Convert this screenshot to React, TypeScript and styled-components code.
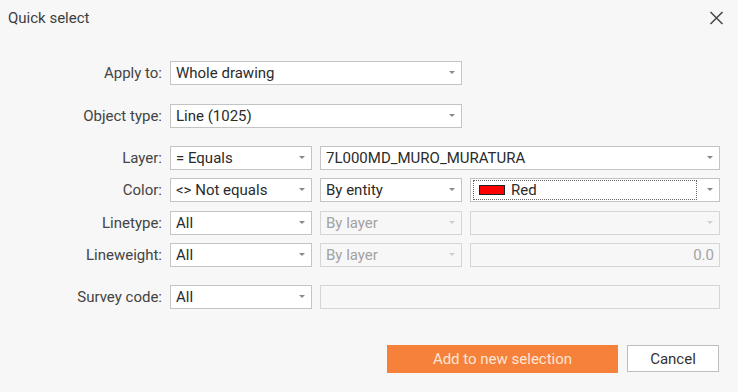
import React from 'react'
import styled, { createGlobalStyle, css } from 'styled-components'

const GlobalStyle = createGlobalStyle`
  html, body {
    margin: 0;
    padding: 0;
    background: #f7f7f7;
  }
  body {
    font-family: Roboto, "Liberation Sans", sans-serif;
    color: #333;
  }
`

const Dialog = styled.div`
  width: 738px;
  height: 392px;
  box-sizing: border-box;
  background: #f7f7f7;
  display: flex;
  flex-direction: column;
`

const Header = styled.div`
  display: flex;
  align-items: center;
  justify-content: space-between;
  height: 36px;
  padding: 0 14px 0 8px;
`

const Title = styled.span`
  font-size: 15px;
  color: #3d3d3d;
`

const CloseButton = styled.button`
  border: 0;
  background: transparent;
  padding: 0;
  width: 16px;
  height: 16px;
  display: flex;
  align-items: center;
  justify-content: center;
  cursor: pointer;
`

const Form = styled.div`
  display: flex;
  flex-direction: column;
  gap: 18.5px;
  margin-top: 25px;
  padding-right: 18px;
`

const Group = styled.div`
  display: grid;
  grid-template-columns: 162px 142px 142px 250px;
  grid-auto-rows: 24px;
  column-gap: 8px;
  row-gap: 8.3px;
`

const Label = styled.label`
  display: flex;
  align-items: center;
  justify-content: flex-end;
  font-size: 15px;
  color: #444;
  white-space: nowrap;
`

const Field = styled.div<{ $span?: number; $disabled?: boolean; $right?: boolean }>`
  position: relative;
  grid-column: span ${(p) => p.$span ?? 1};
  box-sizing: border-box;
  height: 24px;
  display: flex;
  align-items: center;
  justify-content: ${(p) => (p.$right ? 'flex-end' : 'flex-start')};
  padding: 0 5px;
  font-size: 15px;
  border: 1px solid #c4c4c4;
  background: #fff;
  color: #2b2b2b;
  white-space: nowrap;
  ${(p) =>
    p.$disabled &&
    css`
      background: #f7f7f7;
      border-color: #d5d5d5;
      color: #a3a3a3;
    `}
`

const Arrow = styled.span<{ $disabled?: boolean }>`
  position: absolute;
  right: 6px;
  top: 9px;
  width: 0;
  height: 0;
  border-left: 3.5px solid transparent;
  border-right: 3.5px solid transparent;
  border-top: 3.5px solid ${(p) => (p.$disabled ? '#cfcfcf' : '#8a8a8a')};
`

const FocusRing = styled.span`
  flex: 1;
  display: flex;
  align-items: center;
  gap: 6px;
  height: 18px;
  margin: 0 17px 0 -3px;
  padding: 0 5px;
  border: 1px dotted #666;
`

const Swatch = styled.span`
  width: 24px;
  height: 8px;
  background: #ff0000;
  border: 1px solid #222;
`

const Buttons = styled.div`
  display: flex;
  justify-content: flex-end;
  gap: 9px;
  margin-top: 36px;
  padding-right: 19px;
`

const Button = styled.button<{ $primary?: boolean }>`
  height: 28px;
  box-sizing: border-box;
  font-family: inherit;
  font-size: 15px;
  cursor: pointer;
  ${(p) =>
    p.$primary
      ? css`
          width: 231px;
          background: #f5813a;
          border: 1px solid #f5813a;
          color: #fde6d6;
        `
      : css`
          width: 92px;
          height: 27px;
          background: #fff;
          border: 1px solid #bdbdbd;
          color: #333;
        `}
`

type SelectProps = {
  value?: string
  span?: number
  disabled?: boolean
}

const Select = ({ value, span, disabled }: SelectProps) => (
  <Field $span={span} $disabled={disabled}>
    {value}
    <Arrow $disabled={disabled} />
  </Field>
)

function App() {
  return (
    <Dialog>
      <GlobalStyle />
      <Header>
        <Title>Quick select</Title>
        <CloseButton aria-label="Close">
          <svg width="15" height="14" viewBox="0 0 15 14">
            <path d="M1.5 1 L13.5 13 M13.5 1 L1.5 13" stroke="#4a4a4a" strokeWidth="1.6" />
          </svg>
        </CloseButton>
      </Header>
      <Form>
        <Group>
          <Label>Apply to:</Label>
          <Select value="Whole drawing" span={2} />
        </Group>
        <Group>
          <Label>Object type:</Label>
          <Select value="Line (1025)" span={2} />
        </Group>
        <Group>
          <Label>Layer:</Label>
          <Select value="= Equals" />
          <Select value="7L000MD_MURO_MURATURA" span={2} />

          <Label>Color:</Label>
          <Select value="<> Not equals" />
          <Select value="By entity" />
          <Field>
            <FocusRing>
              <Swatch />
              Red
            </FocusRing>
            <Arrow />
          </Field>

          <Label>Linetype:</Label>
          <Select value="All" />
          <Select value="By layer" disabled />
          <Select disabled />

          <Label>Lineweight:</Label>
          <Select value="All" />
          <Select value="By layer" disabled />
          <Field $disabled $right>
            0.0
          </Field>
        </Group>
        <Group>
          <Label>Survey code:</Label>
          <Select value="All" />
          <Field $span={2} $disabled />
        </Group>
      </Form>
      <Buttons>
        <Button $primary>Add to new selection</Button>
        <Button>Cancel</Button>
      </Buttons>
    </Dialog>
  )
}

export default App
